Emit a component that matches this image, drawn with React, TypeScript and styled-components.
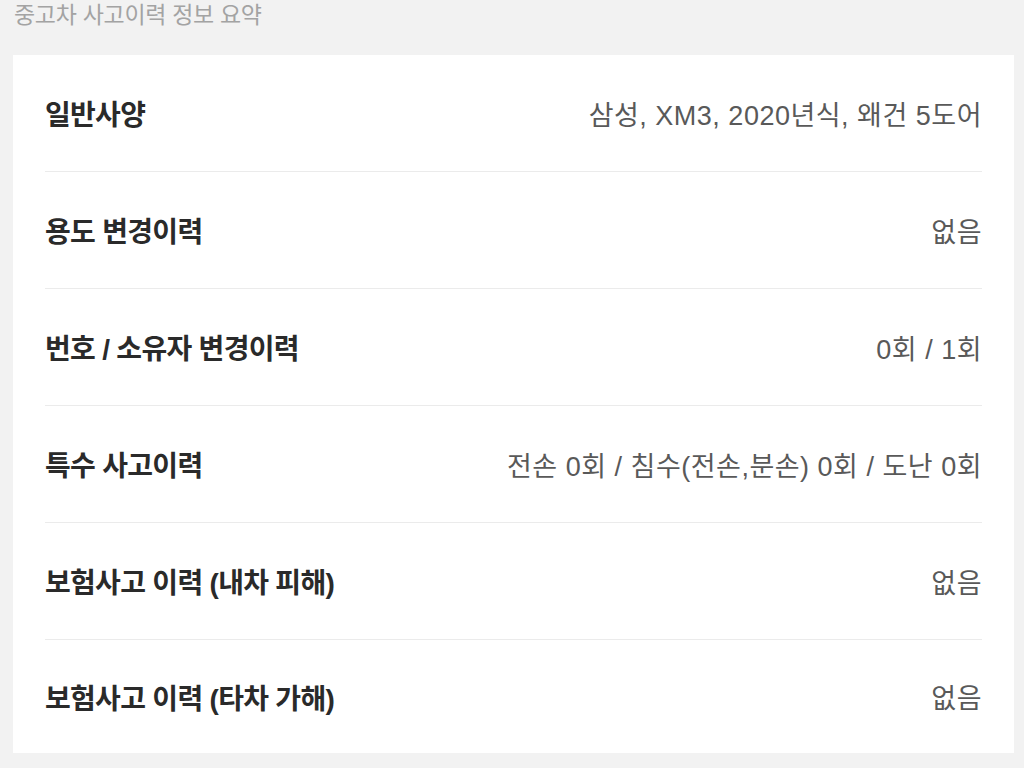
import React from 'react';
import styled, {createGlobalStyle} from "styled-components";

const GlobalStyle = createGlobalStyle`
html, body {
margin: 0;
padding: 0;
background: #f2f2f2;
font-family: "Liberation Sans", "Noto Sans CJK KR", sans-serif;
}`;

const Page = styled.div`
width: 1024px;
height: 768px;
overflow: hidden;
padding: 0 10px 0 13px;
box-sizing: border-box;`;

const Heading = styled.h2`
margin: 0 0 0 1px;
height: 55px;
font-size: 23px;
font-weight: 400;
letter-spacing: -0.3px;
color: #a3a3a3;
line-height: 30px;`;

const Card = styled.div`
background: #fff;
padding: 0 32px;
width: 1001px;
box-sizing: border-box;`;

const Row = styled.div`
display: flex;
justify-content: space-between;
align-items: center;
height: 116px;
border-bottom: 1px solid #ebebeb;
&:last-child {
border-bottom: none;
height: 113px;
}`;

const Label = styled.div`
font-size: 28px;
font-weight: 700;
letter-spacing: -0.7px;
color: #2a2a2a;`;

const Value = styled.div`
font-size: 27px;
font-weight: 400;
letter-spacing: 0.5px;
color: #595959;`;

const rows: [string, string][] = [
    ['일반사양', '삼성, XM3, 2020년식, 왜건 5도어'],
    ['용도 변경이력', '없음'],
    ['번호 / 소유자 변경이력', '0회 / 1회'],
    ['특수 사고이력', '전손 0회 / 침수(전손,분손) 0회 / 도난 0회'],
    ['보험사고 이력 (내차 피해)', '없음'],
    ['보험사고 이력 (타차 가해)', '없음'],
];

const App = () => {
    return (
        <Page>
            <GlobalStyle/>
            <Heading>중고차 사고이력 정보 요약</Heading>
            <Card>
                {rows.map(([label, value]) => (
                    <Row key={label}>
                        <Label>{label}</Label>
                        <Value>{value}</Value>
                    </Row>
                ))}
            </Card>
        </Page>
    );
};

export default App;
